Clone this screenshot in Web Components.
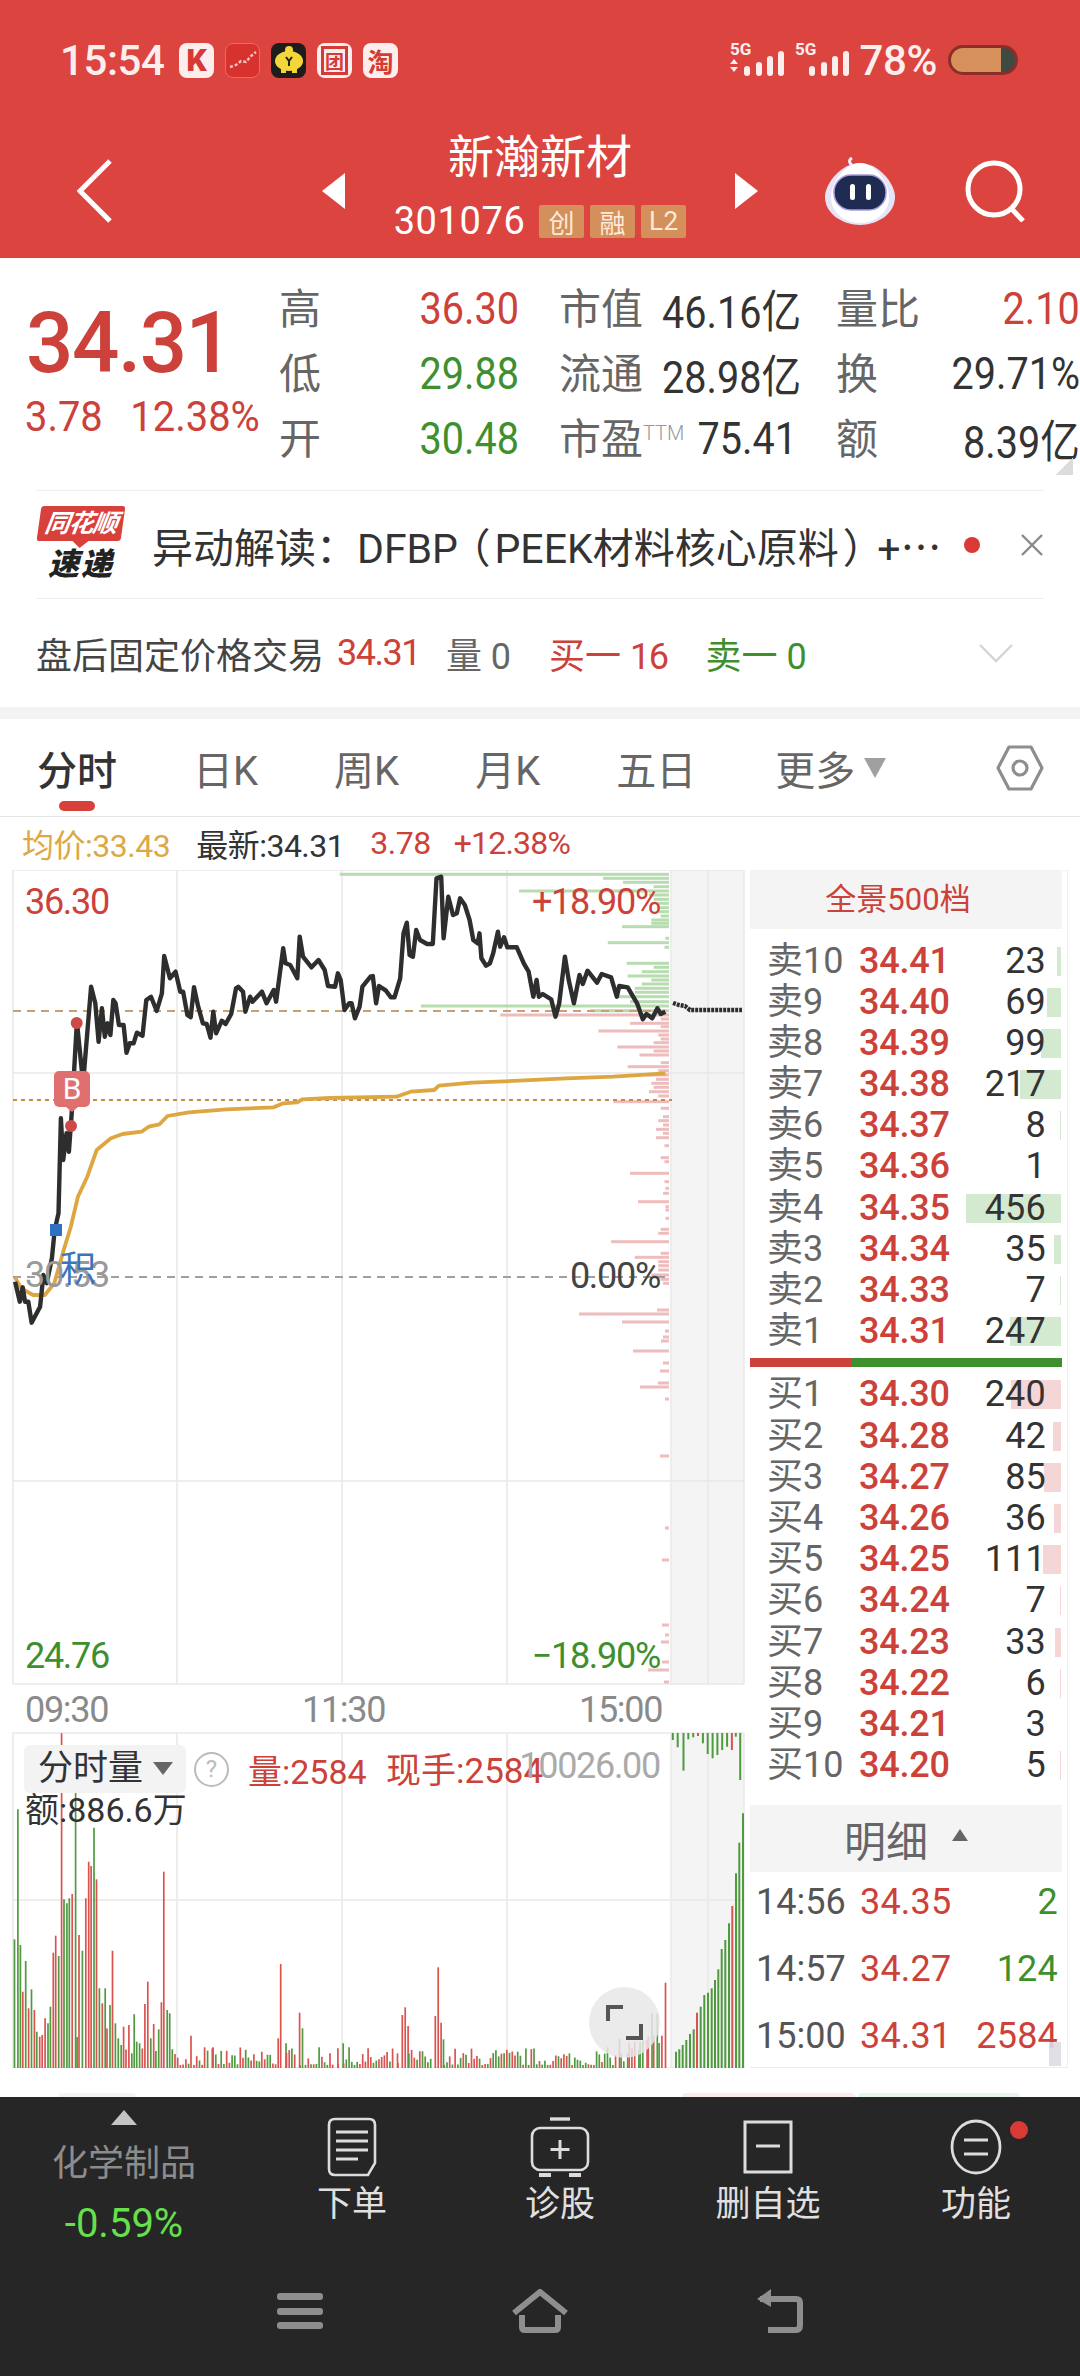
<!DOCTYPE html>
<html lang="zh">
<head>
<meta charset="utf-8">
<title>新瀚新材</title>
<style>
  html, body { margin: 0; padding: 0; background: #fff; }
  body { width: 1080px; height: 2376px; overflow: hidden; font-family: Roboto, "Noto Sans CJK SC", sans-serif; color: #333; }
  .chart-row { display: flex; height: 1198px; }
</style>
</head>
<body>
<status-bar></status-bar>
<stock-header></stock-header>
<quote-panel></quote-panel>
<notice-bar></notice-bar>
<after-hours></after-hours>
<chart-tabs></chart-tabs>
<chart-legend></chart-legend>
<div class="chart-row">
  <trend-chart></trend-chart>
  <order-book></order-book>
</div>
<peek-strip></peek-strip>
<bottom-bar></bottom-bar>
<script>
const RED = '#cc4139';
const GREEN = '#3e8f2d';

class SignalIcon extends HTMLElement {
  connectedCallback() {
    const arrows = this.hasAttribute('arrows');
    this.attachShadow({ mode: 'open' }).innerHTML = `
      <style>:host { display: block; width: 54px; height: 36px; } svg { display: block; margin-top: -10px; }</style>
      <svg width="54" height="46" viewBox="0 -10 54 46" fill="#fdeeee">
        <text x="0" y="13" font-size="17" font-weight="700" font-family="Roboto">5G</text>
        ${arrows ? '<path d="M4 17l4 5H0zM4 30l4-5H0z"/>' : ''}
        <rect x="14" y="24" width="6" height="10" rx="3"/>
        <rect x="26" y="20" width="6" height="14" rx="3"/>
        <rect x="37" y="14" width="6" height="20" rx="3"/>
        <rect x="48" y="9" width="6" height="25" rx="3"/>
      </svg>`;
  }
}
customElements.define('signal-icon', SignalIcon);

class StatusBar extends HTMLElement {
  connectedCallback() {
    this.attachShadow({ mode: 'open' }).innerHTML = `
      <style>
        :host { display: flex; align-items: center; height: 120px; background: #dc4440; color: #fdeeee; padding: 0 62px 0 60px; box-sizing: border-box; }
        .time { font-size: 42px; font-weight: 500; width: 119px; letter-spacing: -.4px; }
        .apps { display: flex; gap: 11px; }
        .app { width: 35px; height: 35px; border-radius: 8px; background: #fdeeee; color: #d63a36; display: flex; align-items: center; justify-content: center; font-size: 26px; font-weight: 700; box-sizing: border-box; }
        .app svg { display: block; }
        .frame { border: 3px solid #d63a36; width: 27px; height: 29px; font-size: 19px; display: flex; align-items: center; justify-content: center; box-sizing: border-box; }
        .right { margin-left: auto; display: flex; align-items: center; gap: 11px; }
        .pct { font-size: 42px; font-weight: 500; letter-spacing: -.4px; }
        .batt { width: 70px; height: 30px; border: 3px solid #8c2d2a; border-radius: 15px; box-sizing: border-box; background: linear-gradient(90deg, #d6905c 78%, #3f4a40 78%); }
      </style>
      <div class="time">15:54</div>
      <div class="apps">
        <div class="app" style="font-size:32px;font-weight:900">K</div>
        <div class="app" style="background:#d8322e;border:1px solid #e96a66">
          <svg width="30" height="24" viewBox="0 0 30 24"><path d="M2 19l6-2 5-4 5 1 5-6 5-4" fill="none" stroke="#f6c9c7" stroke-width="2.4" stroke-dasharray="3 2"/></svg>
        </div>
        <div class="app" style="background:#1d1d1d">
          <svg width="32" height="30" viewBox="0 0 32 30"><circle cx="16" cy="5" r="4" fill="#f4d63a"/><ellipse cx="16" cy="16" rx="14" ry="10" fill="#f4d63a"/><rect x="8" y="23" width="5" height="5" fill="#f4d63a"/><rect x="19" y="23" width="5" height="5" fill="#f4d63a"/><path d="M13 12l3 4 3-4M16 16v5" fill="none" stroke="#222" stroke-width="2"/></svg>
        </div>
        <div class="app"><div class="frame">团</div></div>
        <div class="app">淘</div>
      </div>
      <div class="right">
        <signal-icon arrows></signal-icon>
        <signal-icon></signal-icon>
        <div class="pct">78%</div>
        <div class="batt"></div>
      </div>`;
  }
}
customElements.define('status-bar', StatusBar);

class StockHeader extends HTMLElement {
  connectedCallback() {
    this.attachShadow({ mode: 'open' }).innerHTML = `
      <style>
        :host { display: flex; align-items: center; height: 138px; background: #dc4440; color: #fff; padding-left: 77px; box-sizing: border-box; }
        svg { display: block; flex: none; }
        .center { width: 390px; display: flex; flex-direction: column; align-items: center; }
        .name { font-size: 46px; line-height: 60px; height: 60px; margin-top: -10px; }
        .code { display: flex; align-items: center; height: 40px; margin-top: 14px; gap: 6px; font-size: 38px; letter-spacing: .6px; }
        .code span { margin-right: 8px; }
        .badge { background: #d4905a; color: #fde9d8; font-size: 26px; height: 33px; border-radius: 2px; width: 45px; display: flex; align-items: center; justify-content: center; box-sizing: border-box; }
      </style>
      <svg width="35" height="65" viewBox="0 0 35 65" style="margin-top:4px"><path d="M33 2L3 32l30 30" fill="none" stroke="#fff" stroke-width="5"/></svg>
      <svg width="23" height="36" viewBox="0 0 23 36" style="margin-left:210px;margin-top:4px"><path d="M23 0v36L0 18z" fill="#fff"/></svg>
      <div class="center">
        <div class="name">新瀚新材</div>
        <div class="code"><span>301076</span><div class="badge">创</div><div class="badge">融</div><div class="badge">L2</div></div>
      </div>
      <svg width="23" height="36" viewBox="0 0 23 36" style="margin-top:4px"><path d="M0 0v36l23-18z" fill="#fff"/></svg>
      <svg width="70" height="68" viewBox="0 0 70 68" style="margin-left:67px;margin-top:4px">
        <path d="M30 9c-6-1-7-6-3-8" fill="none" stroke="#eef0fb" stroke-width="3"/>
        <path d="M35 6C53 6 70 26 70 40 70 57 52 68 35 68S0 57 0 40C0 26 17 6 35 6z" fill="#e6e3f7"/>
        <path d="M35 6C50 6 64 26 64 40 64 56 50 66 35 66S6 56 6 40C6 26 20 6 35 6z" fill="#fff"/>
        <rect x="9" y="18" width="52" height="35" rx="17" fill="#1f2b50" stroke="#a89be0" stroke-width="1.5"/>
        <rect x="25" y="27" width="5" height="16" rx="2.5" fill="#fff"/>
        <rect x="41" y="27" width="5" height="16" rx="2.5" fill="#fff"/>
      </svg>
      <svg width="62" height="62" viewBox="0 0 62 62" style="margin-left:70px;margin-top:4px"><circle cx="29" cy="29" r="26" fill="none" stroke="#fff" stroke-width="5"/><path d="M46 48l12 13" stroke="#fff" stroke-width="5"/></svg>`;
  }
}
customElements.define('stock-header', StockHeader);

class QuotePanel extends HTMLElement {
  connectedCallback() {
    const cell = (label, value, color) => `<div class="cell"><span class="lb">${label}</span><span class="val" style="color:${color}">${value}</span></div>`;
    this.attachShadow({ mode: 'open' }).innerHTML = `
      <style>
        :host { display: flex; height: 232px; padding: 18px 0 0 26px; box-sizing: border-box; position: relative; }
        .left { width: 254px; }
        .price { font-size: 86px; line-height: 98px; height: 98px; margin-top: 18px; font-weight: 500; color: ${RED}; letter-spacing: -1.5px; transform: scaleX(.97); transform-origin: left; }
        .chg { font-size: 42px; line-height: 50px; color: ${RED}; display: flex; gap: 29px; white-space: nowrap; transform: scaleX(.95); transform-origin: left; margin-left: -1px; }
        .grid { display: grid; grid-template-columns: 240px 237px 244px; column-gap: 40px; grid-auto-rows: 65px; align-items: center; }
        .cell { display: flex; justify-content: space-between; align-items: center; white-space: nowrap; }
        .lb { font-size: 42px; color: #666; margin-top: -6px; }
        .lb sup { font-size: 20px; color: #999; vertical-align: 14px; line-height: 0; font-weight: 300; }
        .val { font-size: 45px; transform: scaleX(.88); transform-origin: right; }
        .corner { position: absolute; right: 7px; bottom: 15px; width: 18px; height: 18px; background: linear-gradient(135deg, transparent 50%, #dcdcdc 50%); }
      </style>
      <div class="left">
        <div class="price">34.31</div>
        <div class="chg"><span>3.78</span><span>12.38%</span></div>
      </div>
      <div class="grid">
        ${cell('高', '36.30', RED)}${cell('市值', '46.16亿', '#333')}${cell('量比', '2.10', RED)}
        ${cell('低', '29.88', GREEN)}${cell('流通', '28.98亿', '#333')}${cell('换', '29.71%', '#333')}
        ${cell('开', '30.48', GREEN)}${cell('市盈<sup>TTM</sup>', '75.41', '#333')}${cell('额', '8.39亿', '#333')}
      </div>
      <div class="corner"></div>`;
  }
}
customElements.define('quote-panel', QuotePanel);

class NoticeBar extends HTMLElement {
  connectedCallback() {
    this.attachShadow({ mode: 'open' }).innerHTML = `
      <style>
        :host { display: flex; align-items: center; height: 108px; margin: 0 36px; border-top: 1.5px solid #eee; box-sizing: border-box; }
        .logo { width: 88px; flex: none; display: flex; flex-direction: column; align-items: center; margin: 0 27px 0 1px; }
        .tag { position: relative; background: #d8403c; color: #fff; font-size: 25px; font-weight: 700; width: 84px; height: 35px; line-height: 35px; text-align: center; border-radius: 3px; transform: skewX(-8deg); font-style: italic; white-space: nowrap; letter-spacing: -1px; }
        .tag::after { content: ''; position: absolute; left: 36px; top: 35px; border: 8px solid transparent; border-top: 7px solid #d8403c; border-bottom: 0; }
        .sub { font-size: 31px; font-weight: 900; font-style: italic; color: #222; line-height: 36px; margin-top: 6px; letter-spacing: 2px; }
        .txt { font-size: 41px; color: #333; white-space: nowrap; width: 810px; overflow: hidden; }
        .txt b { font-weight: 400; font-family: "Noto Sans CJK SC", sans-serif; }
        .txt .half { font-feature-settings: "halt"; margin: 0 4px 0 12px; }
        .txt .half2 { font-feature-settings: "halt"; margin: 0 14px 0 4px; }
        .dot { width: 16px; height: 16px; border-radius: 50%; background: #d93a36; margin-left: 5px; flex: none; }
        svg { margin-left: 40px; flex: none; display: block; }
      </style>
      <div class="logo"><div class="tag">同花顺</div><div class="sub">速递</div></div>
      <div class="txt">异动解读：DFBP<b class="half">（</b>PEEK材料核心原料<b class="half2">）</b>+<b>…</b></div>
      <div class="dot"></div>
      <svg width="24" height="24" viewBox="0 0 24 24"><path d="M2 2l20 20M22 2L2 22" stroke="#8a8a8a" stroke-width="2.4"/></svg>`;
  }
}
customElements.define('notice-bar', NoticeBar);

class AfterHours extends HTMLElement {
  connectedCallback() {
    this.attachShadow({ mode: 'open' }).innerHTML = `
      <style>
        :host { display: flex; align-items: center; height: 109px; margin: 0 36px; border-top: 1.5px solid #eee; box-sizing: border-box; font-size: 36px; white-space: nowrap; }
        .t { color: #444; margin-right: 13px; }
        .g { color: #666; }
        .r { color: ${RED}; }
        .gr { color: ${GREEN}; }
        .n { letter-spacing: -1.5px; }
        svg { margin-left: auto; margin-right: 31px; display: block; }
      </style>
      <span class="t">盘后固定价格交易</span>
      <span class="r n">34.31</span>
      <span class="g" style="margin-left:26px">量 0</span>
      <span class="r" style="margin-left:38px">买一 <span class="n">16</span></span>
      <span class="gr" style="margin-left:38px">卖一 0</span>
      <svg width="34" height="19" viewBox="0 0 34 19"><path d="M1 1l16 16L33 1" fill="none" stroke="#d4d4d4" stroke-width="2.4"/></svg>`;
  }
}
customElements.define('after-hours', AfterHours);

class ChartTabs extends HTMLElement {
  connectedCallback() {
    this.attachShadow({ mode: 'open' }).innerHTML = `
      <style>
        :host { display: block; background: #fff; border-top: 12px solid #f3f3f3; border-bottom: 1.5px solid #e6e6e6; height: 109.5px; box-sizing: border-box; }
        .row { display: flex; align-items: center; height: 97px; padding: 0 36px 0 37px; box-sizing: border-box; position: relative; gap: 76px; font-size: 40px; color: #666; white-space: nowrap; }
        .on { color: #333; font-weight: 500; position: relative; }
        .on::after { content: ''; position: absolute; left: 22px; top: 62px; width: 36px; height: 10px; border-radius: 5px; background: #d8403c; }
        .more { display: flex; align-items: center; gap: 9px; margin-left: 3px; }
        .more i { width: 0; height: 0; border: 11px solid transparent; border-top: 20px solid #a0a0a0; border-bottom: 0; }
        svg { margin-left: auto; display: block; }
      </style>
      <div class="row">
        <span class="on">分时</span><span>日K</span><span>周K</span><span>月K</span><span>五日</span>
        <span class="more"><span>更多</span><i></i></span>
        <svg width="48" height="46" viewBox="0 0 48 46"><path d="M13 2h22l11 21-11 21H13L2 23z" fill="none" stroke="#8e8e8e" stroke-width="3.2" stroke-linejoin="round"/><circle cx="24" cy="23" r="7" fill="none" stroke="#8e8e8e" stroke-width="3.2"/></svg>
      </div>`;
  }
}
customElements.define('chart-tabs', ChartTabs);

class ChartLegend extends HTMLElement {
  connectedCallback() {
    this.attachShadow({ mode: 'open' }).innerHTML = `
      <style>
        :host { display: flex; align-items: center; height: 53px; padding-left: 22px; box-sizing: border-box; font-size: 32px; white-space: nowrap; letter-spacing: -.5px; }
      </style>
      <span style="color:#dba845">均价:33.43</span>
      <span style="color:#333;margin-left:26px">最新:34.31</span>
      <span style="color:${RED};margin-left:26px">3.78</span>
      <span style="color:${RED};margin-left:23px;letter-spacing:-.8px">+12.38%</span>`;
  }
}
customElements.define('chart-legend', ChartLegend);

// zoomed crop coordinates of the trace, converted to page pixels below
const PRICE = [[32,1265],[42,1325],[48,1282],[53,1325],[60,1325],[67,1388],[85,1340],[92,1245],[99,1270],[110,1195],[116,1110],[124,1060],[129,775],[134,900],[141,820],[146,875],[152,760],[163,485],[176,670],[193,380],[202,430],[209,545],[216,445],[222,530],[228,490],[234,525],[240,420],[245,430],[252,495],[262,495],[268,578],[275,550],[283,550],[290,518],[302,527],[310,420],[320,410],[332,453],[343,400],[348,288],[360,355],[372,335],[382,395],[388,395],[397,465],[404,472],[411,382],[420,440],[430,490],[438,492],[446,533],[452,455],[458,520],[470,482],[478,492],[490,462],[500,385],[505,380],[515,395],[520,455],[530,410],[535,425],[555,395],[565,430],[580,390],[585,425],[600,265],[605,310],[615,315],[630,355],[635,230],[642,290],[660,322],[675,300],[688,330],[695,378],[710,380],[716,340],[722,360],[730,450],[740,430],[745,430],[752,475],[762,440],[768,380],[785,350],[790,348],[797,430],[803,378],[818,392],[828,412],[836,412],[848,355],[855,220],[862,188],[868,285],[875,290],[882,210],[890,240],[905,252],[917,252],[925,55],[935,50],[940,235],[950,110],[960,165],[968,160],[975,115],[985,135],[995,180],[1003,240],[1012,250],[1016,220],[1020,295],[1030,317],[1038,310],[1045,280],[1055,215],[1060,260],[1068,232],[1075,262],[1095,262],[1110,310],[1120,335],[1130,410],[1137,360],[1142,410],[1150,402],[1168,418],[1177,470],[1185,430],[1197,290],[1205,360],[1216,430],[1228,345],[1235,372],[1245,332],[1265,368],[1275,342],[1295,352],[1307,410],[1312,378],[1330,382],[1350,430],[1362,478],[1370,462],[1382,475],[1393,445],[1400,462],[1410,455]];
const AVG = [[32,1252],[45,1285],[70,1305],[95,1305],[115,1270],[135,1170],[150,1100],[165,1010],[185,950],[205,870],[235,835],[260,822],[300,815],[315,800],[338,793],[355,768],[400,757],[480,748],[580,742],[600,730],[630,727],[640,718],[700,714],[840,710],[870,695],[920,690],[930,677],[1000,668],[1100,662],[1200,655],[1300,650],[1410,640]];
const SIDE_GREEN = [[43,720],[55,1278],[67,1320],[80,1385],[93,1100],[105,1375],[118,1385],[130,1395],[143,1395],[155,1395],[168,1400],[180,1380],[190,1380],[200,1318],[235,1410],[248,1288],[262,1408],[310,1328],[322,1385],[335,1360],[348,1330],[360,1380],[372,1360],[385,1345],[397,1345],[410,1310],[425,1335],[438,892],[452,1250]];
const SIDE_RED = [[465,1060],[477,1400],[490,1335],[500,1400],[513,1268],[525,1395],[537,1400],[548,1385],[561,1308],[573,1385],[585,1355],[608,1400],[620,1330],[632,1395],[645,1370],[658,1390],[670,1380],[682,1385],[695,1375],[708,1395],[725,1300],[745,1400],[770,1405],[782,1395],[795,1405],[808,1390],[820,1405],[833,1390],[857,1408],[893,1400],[905,1408],[940,1335],[965,1408],[985,1410],[1000,1405],[1025,1352],[1040,1410],[1050,1410],[1075,1410],[1108,1400],[1120,1395],[1145,1295],[1180,1400],[1192,1345],[1205,1395],[1217,1395],[1230,1395],[1245,1380],[1258,1400],[1270,1405]];
// lower half of the same book, read from another crop: [y, left] in page pixels
const SIDE_LOW = [[1310,657],[1314,579],[1322,622],[1331,665],[1337,663],[1341,661],[1351,633],[1363,663],[1371,660],[1383,658],[1387,640],[1399,665],[1456,660],[1528,665],[1560,662],[1625,662],[1635,665],[1642,661],[1662,662],[1670,648],[1682,664]];
const VOL_PEAKS = [[30,838,'g'],[37,448,'g'],[42,855,'g'],[47,995,'r'],[53,903,'g'],[59,1045,'r'],[65,988,'g'],[71,1050,'r'],[76,1115,'g'],[82,1130,'r'],[87,1125,'r'],[93,1075,'r'],[99,1090,'g'],[104,1040,'g'],[110,878,'r'],[115,827,'r'],[121,888,'g'],[127,220,'r'],[132,718,'g'],[138,730,'g'],[143,715,'g'],[149,702,'r'],[156,390,'g'],[163,825,'r'],[170,872,'g'],[177,715,'r'],[183,605,'r'],[188,618,'r'],[194,503,'g'],[199,658,'r'],[205,985,'g'],[211,1030,'r'],[217,985,'g'],[227,1035,'g'],[232,872,'r'],[238,1090,'g'],[244,1135,'g'],[250,1155,'g'],[255,1100,'r'],[266,1095,'r'],[272,1180,'g'],[282,1145,'g'],[288,1150,'g'],[299,1032,'r'],[305,965,'r'],[311,1135,'g'],[317,1092,'r'],[333,1027,'r'],[338,635,'r'],[345,1050,'g'],[350,1060,'g'],[394,1127,'r'],[422,1162,'r'],[438,1165,'r'],[540,1175,'r'],[574,1135,'r'],[579,912,'r'],[585,1115,'r'],[590,1150,'g'],[618,1058,'r'],[624,1105,'g'],[697,1165,'r'],[708,1150,'g'],[820,1180,'r'],[830,1065,'r'],[836,1042,'r'],[842,1098,'r'],[898,1068,'r'],[904,922,'r'],[910,1088,'r'],[915,1138,'g'],[1278,1135,'r'],[1295,1180,'g'],[1318,1170,'g'],[1335,1140,'r'],[1345,1060,'g'],[1356,1060,'g'],[1373,968,'r']];
const EXT_VOL = [[108,815],[118,808],[128,795],[139,780],[150,762],[161,748],[171,698,'r'],[182,680],[193,645],[204,638],[215,625],[225,600],[235,568],[245,507],[256,480],[267,430],[277,378,'r'],[288,280],[298,188],[309,100]];
const EXT_TOP = [[1388,240],[1398,262],[1410,332],[1420,238],[1430,232],[1440,228,'r'],[1450,250],[1460,282],[1470,295],[1480,285],[1490,270],[1500,260],[1510,270,'r'],[1518,230],[1527,360]];

class TrendChart extends HTMLElement {
  connectedCallback() {
    this.attachShadow({ mode: 'open' }).innerHTML = `
      <style>
        :host { display: block; position: relative; width: 750px; height: 1198px; flex: none; }
        svg { position: absolute; left: 0; top: 0; display: block; }
        .lb { position: absolute; font-size: 36px; line-height: 40px; white-space: nowrap; letter-spacing: -1.3px; }
        .tag { position: absolute; left: 54px; top: 201px; width: 36px; height: 36px; background: #e07070; border-radius: 5px; color: #fff; font-size: 30px; line-height: 36px; text-align: center; }
        .tag::after { content: ''; position: absolute; left: 12px; top: 36px; border: 6px solid transparent; border-top: 5px solid #e07070; border-bottom: 0; }
        .box { position: absolute; left: 24px; top: 875px; width: 162px; height: 48px; background: #f3f3f3; border-radius: 6px; font-size: 35px; line-height: 48px; padding-left: 14px; box-sizing: border-box; color: #333; }
        .box i { position: absolute; left: 129px; top: 17px; width: 0; height: 0; border: 10px solid transparent; border-top: 13px solid #666; border-bottom: 0; }
        .help { position: absolute; left: 194px; top: 882px; width: 35px; height: 35px; border: 2px solid #bbb; border-radius: 50%; box-sizing: border-box; color: #bbb; font-size: 24px; line-height: 31px; text-align: center; }
        .expand { position: absolute; left: 589px; top: 1117px; width: 71px; height: 71px; border-radius: 50%; background: rgba(232, 232, 232, .85); }
        .expand svg { left: 17px; top: 17px; }
      </style>
      ${this.chartSvg()}
      <span class="lb" style="left:25px;top:12px;color:${RED}">36.30</span>
      <span class="lb" style="right:90px;top:12px;color:${RED}">+18.90%</span>
      <span class="lb" style="left:25px;top:385px;color:#999">30.53</span>
      <span class="lb" style="left:60px;top:380px;color:#3b74bd">积</span>
      <span class="lb" style="right:90px;top:386px;color:#444">0.00%</span>
      <span class="lb" style="left:25px;top:766px;color:${GREEN}">24.76</span>
      <span class="lb" style="right:90px;top:766px;color:${GREEN}">−18.90%</span>
      <span class="lb" style="left:25px;top:820px;color:#8a8a8a">09:30</span>
      <span class="lb" style="left:302px;top:820px;color:#8a8a8a">11:30</span>
      <span class="lb" style="left:579px;top:820px;color:#8a8a8a">15:00</span>
      <div class="tag">B</div>
      <div class="box">分时量<i></i></div>
      <div class="help">?</div>
      <span class="lb" style="left:248px;top:882px;font-size:34px;letter-spacing:0;color:${RED}">量:2584</span>
      <span class="lb" style="left:386px;top:882px;font-size:35px;letter-spacing:0;color:${RED}">现手:2584</span>
      <span class="lb" style="right:90px;top:876px;color:#aaa">10026.00</span>
      <span class="lb" style="left:25px;top:920px;font-size:34px;letter-spacing:0;color:#333">额:886.6万</span>
      <div class="expand"><svg width="37" height="37" viewBox="0 0 37 37"><path d="M2 17V3h15M35 20v14H20" fill="none" stroke="#555" stroke-width="4"/></svg></div>`;
  }

  chartSvg() {
    const px = (p) => [(p[0] / 2.119).toFixed(1), (860 + p[1] / 3).toFixed(1)];
    const line = (pts) => pts.map(p => px(p).join(',')).join(' ');
    const volX = (d) => d / 2.063;
    const volY = (d) => 1660 + d / 3;
    const grid = '#e8e8e8';
    let out = '';

    out += `<rect x="672" y="870" width="72" height="814" fill="#f4f4f4"/><rect x="672" y="1733" width="72" height="335" fill="#f4f4f4"/>`;
    [13, 177, 342, 507, 671, 708, 744].forEach(x => {
      out += `<path d="M${x} 870V1684M${x} 1733V2068" stroke="${grid}" stroke-width="1.5"/>`;
    });
    [870, 1073, 1481, 1684, 1733, 1900, 2068].forEach(y => {
      out += `<path d="M13 ${y}H744" stroke="${grid}" stroke-width="1.5"/>`;
    });

    SIDE_GREEN.forEach(s => {
      out += `<rect x="${(s[1] / 2.119).toFixed(1)}" y="${(860 + s[0] / 3 - 1.5).toFixed(1)}" width="${(669 - s[1] / 2.119).toFixed(1)}" height="3" fill="#b7dcb0"/>`;
    });
    SIDE_RED.forEach(s => {
      out += `<rect x="${(s[1] / 2.119).toFixed(1)}" y="${(860 + s[0] / 3 - 1.5).toFixed(1)}" width="${(669 - s[1] / 2.119).toFixed(1)}" height="3" fill="#eebcbc"/>`;
    });
    SIDE_LOW.forEach(s => {
      out += `<rect x="${s[1]}" y="${s[0] - 1.5}" width="${669 - s[1]}" height="3" fill="#eebcbc"/>`;
    });

    out += `<path d="M13 1011H669" stroke="#c8a272" stroke-width="2" stroke-dasharray="8 6"/>`;
    out += `<path d="M13 1100H672" stroke="#c98a4a" stroke-width="2" stroke-dasharray="4 4"/>`;
    out += `<path d="M13 1277H669" stroke="#a0a0a0" stroke-width="2" stroke-dasharray="8 6"/>`;

    out += `<polyline points="${line(AVG)}" fill="none" stroke="#dda640" stroke-width="3.8" stroke-linejoin="round"/>`;
    out += `<polyline points="${line(PRICE)}" fill="none" stroke="#2e2e2e" stroke-width="4.4" stroke-linejoin="round"/>`;
    out += `<path d="M673 1003l6 2 6 1 5 4H742" fill="none" stroke="#2e2e2e" stroke-width="4.4" stroke-dasharray="3 1"/>`;
    out += `<circle cx="76.700" cy="1023" r="6" fill="#cc4a48"/><circle cx="71" cy="1126" r="6" fill="#cc4a48"/>`;
    out += `<rect x="50" y="1224" width="12" height="12" fill="#2f6fc4"/>`;

    // quiet minutes get a small seeded bar, the visible peaks come from VOL_PEAKS
    const bars = {};
    let seed = 7;
    const rnd = () => { seed = (seed * 16807) % 2147483647; return seed / 2147483647; };
    for (let i = 0; i < 240; i++) {
      const r = rnd();
      const base = i < 60 ? 14 + r * 40 : i > 225 ? 10 + r * 16 + (i - 225) : 3 + r * r * 18;
      bars[i] = [14.5 + i * 2.72, 2068 - base, rnd() > .5 ? 'r' : 'g'];
    }
    VOL_PEAKS.forEach(p => {
      const i = Math.round((p[0] - 30) / 5.63);
      bars[i] = [volX(p[0]), volY(p[1]), p[2]];
    });
    const color = (c) => c === 'r' ? '#d9534f' : '#4f9a3f';
    Object.values(bars).forEach(b => {
      out += `<path d="M${b[0].toFixed(1)} 2068V${b[1].toFixed(1)}" stroke="${color(b[2])}" stroke-width="1.7"/>`;
    });
    EXT_VOL.forEach(b => {
      const x = 640 + b[0] / 3;
      out += `<path d="M${x.toFixed(1)} 2068V${(1780 + b[1] / 3).toFixed(1)}" stroke="${color(b[2])}" stroke-width="2"/>`;
    });
    EXT_TOP.forEach(b => {
      out += `<path d="M${volX(b[0]).toFixed(1)} 1733V${volY(b[1]).toFixed(1)}" stroke="${color(b[2])}" stroke-width="2"/>`;
    });

    return `<svg width="750" height="1198" viewBox="0 870 750 1198">${out}</svg>`;
  }
}
customElements.define('trend-chart', TrendChart);

class BookRow extends HTMLElement {
  connectedCallback() {
    const side = this.getAttribute('side');
    const bar = side === 'sell' ? '#d3e9d0' : '#f5d6d6';
    this.attachShadow({ mode: 'open' }).innerHTML = `
      <style>
        :host { display: block; position: relative; height: 41.2px; font-size: 36px; line-height: 41.2px; white-space: nowrap; }
        .bar { position: absolute; right: 6px; top: 6px; height: 29px; background: ${bar}; }
        .row { position: relative; display: flex; padding-left: 17px; }
        .lb { width: 92px; color: #666; flex: none; }
        .pr { color: ${RED}; font-weight: 500; letter-spacing: -.2px; }
        .v { position: absolute; right: 21px; color: #333; letter-spacing: .2px; }
      </style>
      <div class="bar" style="width:${this.getAttribute('bar')}px"></div>
      <div class="row"><span class="lb">${this.getAttribute('label')}</span><span class="pr">${this.getAttribute('price')}</span><span class="v">${this.getAttribute('vol')}</span></div>`;
  }
}
customElements.define('book-row', BookRow);

class OrderBook extends HTMLElement {
  connectedCallback() {
    const sells = [[10,'34.41',23,4],[9,'34.40',69,14],[8,'34.39',99,20],[7,'34.38',217,41],[6,'34.37',8,1],[5,'34.36',1,0],[4,'34.35',456,95],[3,'34.34',35,7],[2,'34.33',7,1],[1,'34.31',247,51]];
    const buys = [[1,'34.30',240,50],[2,'34.28',42,8],[3,'34.27',85,17],[4,'34.26',36,7],[5,'34.25',111,18],[6,'34.24',7,1],[7,'34.23',33,6],[8,'34.22',6,1],[9,'34.21',3,0],[10,'34.20',5,1]];
    const rows = (list, word, side) => list.map(r => `<book-row side="${side}" label="${word}${r[0]}" price="${r[1]}" vol="${r[2]}" bar="${r[3]}"></book-row>`).join('');
    const deal = (t, p, v, c) => `<div class="deal"><span class="t">${t}</span><span class="p">${p}</span><span class="n" style="color:${c}">${v}</span></div>`;
    this.attachShadow({ mode: 'open' }).innerHTML = `
      <style>
        :host { display: block; position: relative; width: 318px; height: 1198px; border-right: 1.5px solid #eee; border-top: 1.5px solid #f2f2f2; border-bottom: 1.5px solid #eee; box-sizing: border-box; flex: none; }
        .head { width: 312px; height: 58px; background: #f4f4f4; color: ${RED}; font-size: 31px; line-height: 58px; padding-right: 16px; box-sizing: border-box; text-align: center; margin-bottom: 12px; }
        .split { display: flex; width: 312px; height: 9px; margin: 6px 0 7px; }
        .split i { display: block; height: 9px; }
        .fold { width: 312px; height: 67px; background: #f4f4f4; margin-top: 19px; margin-bottom: -4px; display: flex; align-items: center; justify-content: center; gap: 24px; font-size: 42px; color: #666; }
        .fold i { width: 0; height: 0; border: 8px solid transparent; border-bottom: 12px solid #666; border-top: 0; margin-top: -8px; }
        .deal { position: relative; display: flex; height: 67px; align-items: center; font-size: 36px; white-space: nowrap; padding-left: 6px; }
        .t { color: #555; width: 104px; flex: none; }
        .p { color: ${RED}; letter-spacing: .2px; }
        .n { position: absolute; right: 9px; letter-spacing: .2px; }
        .thumb { position: absolute; right: 6px; bottom: 1px; width: 12px; height: 24px; background: #dcdce2; opacity: .9; }
      </style>
      <div class="head">全景500档</div>
      ${rows(sells, '卖', 'sell')}
      <div class="split"><i style="width:102px;background:${RED}"></i><i style="width:210px;background:${GREEN}"></i></div>
      ${rows(buys, '买', 'buy')}
      <div class="fold"><span>明细</span><i></i></div>
      ${deal('14:56', '34.35', '2', GREEN)}
      ${deal('14:57', '34.27', '124', GREEN)}
      ${deal('15:00', '34.31', '2584', RED)}
      <div class="thumb"></div>`;
  }
}
customElements.define('order-book', OrderBook);

class PeekStrip extends HTMLElement {
  connectedCallback() {
    this.attachShadow({ mode: 'open' }).innerHTML = `
      <style>
        :host { display: flex; align-items: flex-end; height: 29px; padding-left: 58px; box-sizing: border-box; }
        div { height: 4px; border-radius: 4px 4px 0 0; }
      </style>
      <div style="width:78px;background:#f4f4f4"></div>
      <div style="width:173px;margin-left:546px;background:#fdecea"></div>
      <div style="width:162px;margin-left:3px;background:#e8f6ea"></div>`;
  }
}
customElements.define('peek-strip', PeekStrip);

class BottomBar extends HTMLElement {
  connectedCallback() {
    const c = '#dcdcdc';
    this.attachShadow({ mode: 'open' }).innerHTML = `
      <style>
        :host { display: block; height: 279px; background: #262626; }
        .actions { display: grid; grid-template-columns: 248px repeat(4, 208px); height: 150px; }
        .sector { display: flex; flex-direction: column; align-items: center; white-space: nowrap; }
        .sector i { width: 0; height: 0; border: 13px solid transparent; border-bottom: 15px solid #c4c4c4; border-top: 0; margin-top: 13px; }
        .sector .n { font-size: 36px; line-height: 50px; color: #8c8c8c; margin-top: 14px; }
        .sector .v { font-size: 40px; line-height: 50px; color: #66e04c; margin-top: 10px; }
        .act { display: flex; flex-direction: column; align-items: center; padding-top: 20px; box-sizing: border-box; position: relative; }
        .act svg { display: block; height: 60px; }
        .act span { font-size: 35px; line-height: 50px; color: #e0e0e0; margin-top: 3px; white-space: nowrap; }
        .badge { position: absolute; left: 138px; top: 24px; width: 18px; height: 18px; border-radius: 50%; background: #d93a36; }
        .nav { display: grid; grid-template-columns: repeat(3, 240px); padding-left: 180px; height: 129px; align-items: center; justify-items: center; }
        .nav svg { display: block; }
      </style>
      <div class="actions">
        <div class="sector"><i></i><div class="n">化学制品</div><div class="v">-0.59%</div></div>
        <div class="act">
          <svg width="50" height="60" viewBox="0 0 50 60" fill="none" stroke="${c}" stroke-width="2.6"><path d="M8 2h34q6 0 6 6v38l-7 12H8q-6 0-6-6V8q0-6 6-6z"/><path d="M9 15h32M9 24h32M9 33h32M9 42h22" stroke-width="3"/></svg>
          <span>下单</span>
        </div>
        <div class="act">
          <svg width="60" height="60" viewBox="0 0 60 60" fill="none" stroke="${c}" stroke-width="2.6"><path d="M20 2h20" stroke-width="3.4"/><rect x="2" y="11" width="56" height="42" rx="8"/><path d="M30 23v19M20.500 32.500h19" stroke-width="3"/><path d="M9 58h12M39 58h12" stroke-width="4"/></svg>
          <span>诊股</span>
        </div>
        <div class="act">
          <svg width="50" height="60" viewBox="0 0 50 60" fill="none" stroke="${c}" stroke-width="3"><rect x="2" y="5" width="46" height="50"/><path d="M13 29h24"/></svg>
          <span>删自选</span>
        </div>
        <div class="act">
          <svg width="52" height="60" viewBox="0 0 52 60" fill="none" stroke="${c}" stroke-width="2.8"><ellipse cx="26" cy="30" rx="24" ry="26"/><path d="M14 23h24M14 37h24"/></svg>
          <span>功能</span>
          <div class="badge"></div>
        </div>
      </div>
      <div class="nav">
        <svg width="46" height="36" viewBox="0 0 46 36" fill="#8e8e8e"><rect width="46" height="7" rx="3"/><rect y="15" width="46" height="7" rx="3"/><rect y="29" width="46" height="7" rx="3"/></svg>
        <svg width="58" height="44" viewBox="0 0 58 44" fill="none" stroke="#8e8e8e" stroke-width="6"><path d="M3 24L29 3l26 21"/><path d="M11 26v12q0 3 3 3h30q3 0 3-3V26"/></svg>
        <svg width="48" height="44" viewBox="0 0 48 44" fill="none" stroke="#8e8e8e" stroke-width="6"><path d="M4 10h36q4 0 4 4v22q0 5-4 5H12"/><path d="M15 0L1 10l14 8" fill="#8e8e8e" stroke="none"/></svg>
      </div>`;
  }
}
customElements.define('bottom-bar', BottomBar);
</script>
</body>
</html>
